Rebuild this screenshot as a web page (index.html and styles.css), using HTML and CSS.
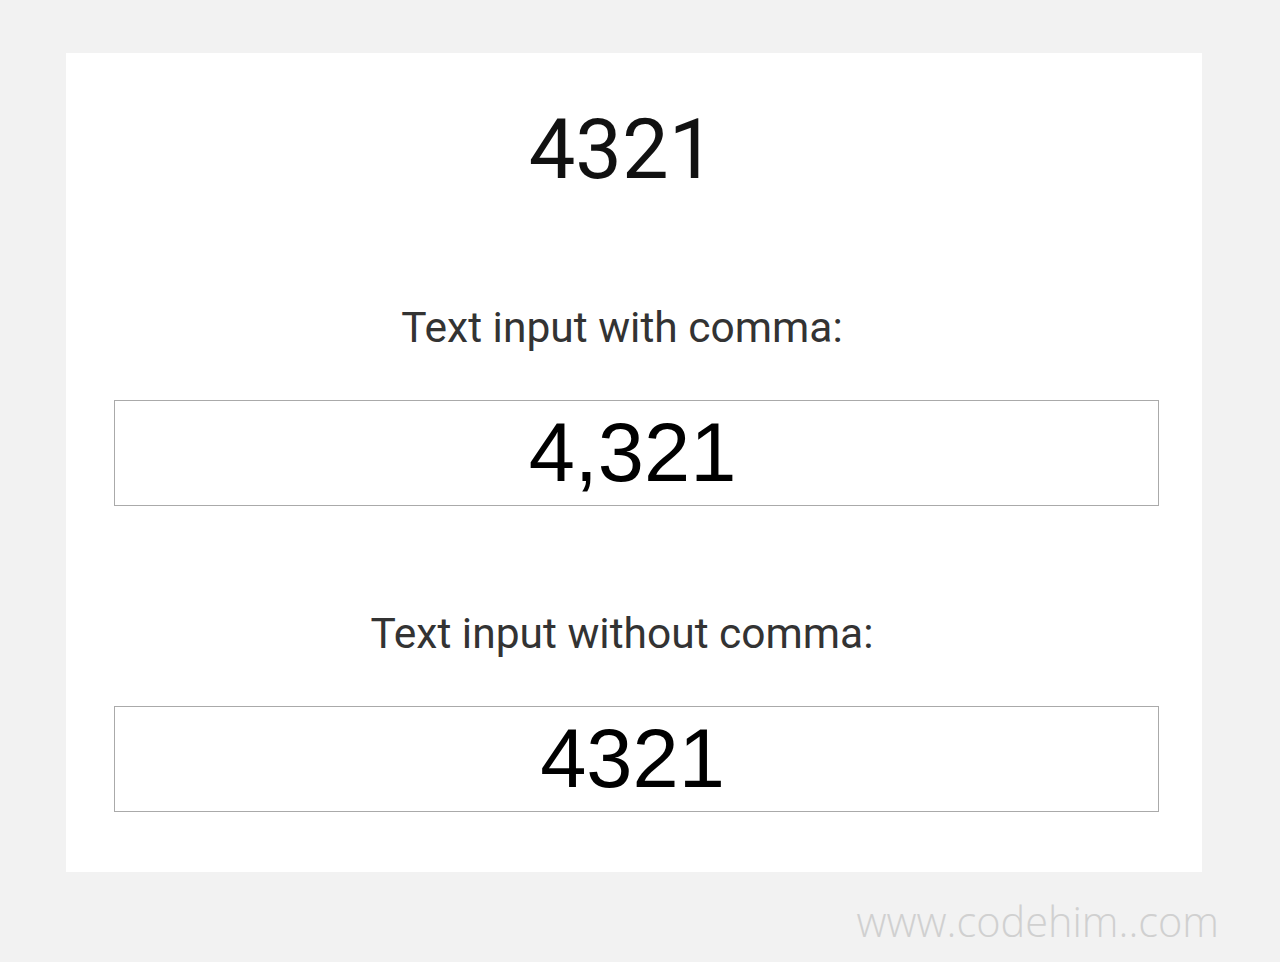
FILE: index.html
```html
<!DOCTYPE html>
<html lang="en">
<head>
    <meta charset="UTF-8">
    <meta name="viewport" content="width=device-width, initial-scale=1.0">
    <title>Number Format</title>
    <link rel="stylesheet" href="styles.css">
</head>
<body>
    <div class="container">
        <h1 class="number" id="number">4321</h1>
        <p class="label">Text input with comma:</p>
        <input type="text" class="num-input" id="with-comma" value="4,321">
        <p class="label">Text input without comma:</p>
        <input type="text" class="num-input" id="without-comma" value="4321">
    </div>
    <div class="credit">www.codehim..com</div>
</body>
</html>
```

FILE: styles.css
```css
body {
    margin: 0;
    background-color: #f2f2f2;
    font-family: Roboto, "Liberation Sans", sans-serif;
}
.container {
    width: 1136px;
    margin: 53px 0 0 66px;
    box-sizing: border-box;
    height: 819px;
    padding: 47px 72px 0 48px;
    background: #fff;
    text-align: center;
}
.number {
    margin: 0;
    font-size: 83px;
    font-weight: 400;
    line-height: 100px;
    color: #111;
}
.label {
    margin: 104px 0 48px;
    font-size: 42.5px;
    line-height: 48px;
    color: #333;
}
.num-input {
    display: block;
    width: 1045px;
    height: 106px;
    box-sizing: border-box;
    border: 1px solid #aaa;
    padding: 0 8px 0 0;
    font-family: "Liberation Sans", Arial, sans-serif;
    font-size: 83px;
    text-align: center;
    color: #000;
    outline: none;
}
.credit {
    width: 1219px;
    text-align: right;
    margin-top: 21px;
    font-family: "Open Sans", sans-serif;
    font-weight: 300;
    font-size: 41.5px;
    color: #d0d0d0;
}
```
